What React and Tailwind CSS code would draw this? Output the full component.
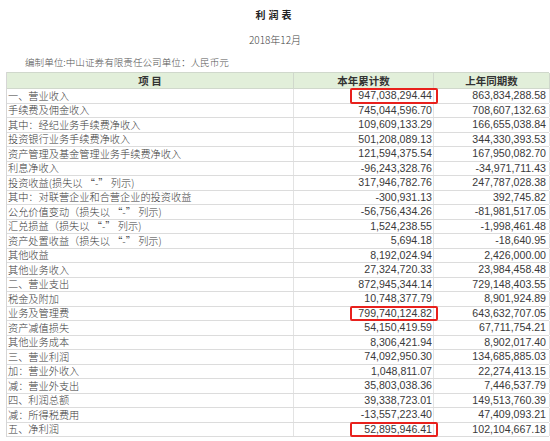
const ROWS = [
  ["一、营业收入", "947,038,294.44", "863,834,288.58", true],
  ["手续费及佣金收入", "745,044,596.70", "708,607,132.63"],
  ["其中：经纪业务手续费净收入", "109,609,133.29", "166,655,038.84"],
  ["投资银行业务手续费净收入", "501,208,089.13", "344,330,393.53"],
  ["资产管理及基金管理业务手续费净收入", "121,594,375.54", "167,950,082.70"],
  ["利息净收入", "-96,243,328.76", "-34,971,711.43"],
  ["投资收益(损失以 “-” 列示)", "317,946,782.76", "247,787,028.38"],
  ["其中：对联营企业和合营企业的投资收益", "-300,931.13", "392,745.82"],
  ["公允价值变动（损失以 “-” 列示)", "-56,756,434.26", "-81,981,517.05"],
  ["汇兑损益（损失以 “-” 列示)", "1,524,238.55", "-1,998,461.48"],
  ["资产处置收益（损失以 “-” 列示)", "5,694.18", "-18,640.95"],
  ["其他收益", "8,192,024.94", "2,426,000.00"],
  ["其他业务收入", "27,324,720.33", "23,984,458.48"],
  ["二、营业支出", "872,945,344.14", "729,148,403.55"],
  ["税金及附加", "10,748,377.79", "8,901,924.89"],
  ["业务及管理费", "799,740,124.82", "643,632,707.05", true],
  ["资产减值损失", "54,150,419.59", "67,711,754.21"],
  ["其他业务成本", "8,306,421.94", "8,902,017.40"],
  ["三、营业利润", "74,092,950.30", "134,685,885.03"],
  ["加：营业外收入", "1,048,811.07", "22,274,413.15"],
  ["减：营业外支出", "35,803,038.36", "7,446,537.79"],
  ["四、利润总额", "39,338,723.01", "149,513,760.39"],
  ["减：所得税费用", "-13,557,223.40", "47,409,093.21"],
  ["五、净利润", "52,895,946.41", "102,104,667.18", true],
]

const cjk = { fontFamily: '"Microsoft YaHei", "Noto Sans CJK SC", sans-serif' }
const num = { fontFamily: '"Liberation Sans", "Noto Sans CJK SC", sans-serif' }

export default function App() {
  return (
    <div className="w-[550px] h-[441px] overflow-hidden bg-white text-[#444]" style={cjk}>
      <div className="h-[28px] flex items-end justify-center pb-[6px] text-[10px] font-bold tracking-[3px] text-[#222]">利润表</div>
      <div className="h-[22px] flex items-center justify-center text-[10px] font-light text-[#444]">2018年12月</div>
      <div className="h-[22px] flex items-end pb-[3px] pl-[25px] text-[9.6px] font-light text-[#555]">编制单位:中山证券有限责任公司单位：人民币元</div>

      <div className="ml-[6px] w-[543px] border-l border-[#d6d6d6]">
        <div className="grid grid-cols-[287px_140px_116px] h-[17px] bg-[#e2efda] border-t border-b border-[#d0d8cc] text-[10.5px] font-bold text-[#333]">
          <div className="flex items-center justify-center border-r border-[#d0d8cc]">项 目</div>
          <div className="flex items-center justify-center border-r border-[#d0d8cc]">本年累计数</div>
          <div className="flex items-center justify-center border-r border-[#d0d8cc]">上年同期数</div>
        </div>
        {ROWS.map(([label, cur, prev, mark]) => (
          <div key={label} className="grid grid-cols-[287px_140px_116px] h-[14.5px] border-b border-[#dcdcdc]">
            <div className="flex items-center pl-[1px] text-[10.2px] leading-none font-light text-[#3a3a3a] border-r border-[#e3e3e3] whitespace-nowrap">{label}</div>
            <div className="relative flex items-center justify-end pr-[1px] text-[10.6px] leading-none text-[#3a3a3a] border-r border-[#e3e3e3]" style={num}>
              {cur}
              {mark && <span className="absolute left-[56px] -right-[5px] -top-[1px] -bottom-[1px] border-2 border-[#e8211d] rounded-[2px]" />}
            </div>
            <div className="flex items-center justify-end pr-[3px] text-[10.6px] leading-none text-[#3a3a3a] border-r border-[#e3e3e3]" style={num}>{prev}</div>
          </div>
        ))}
      </div>
    </div>
  )
}
